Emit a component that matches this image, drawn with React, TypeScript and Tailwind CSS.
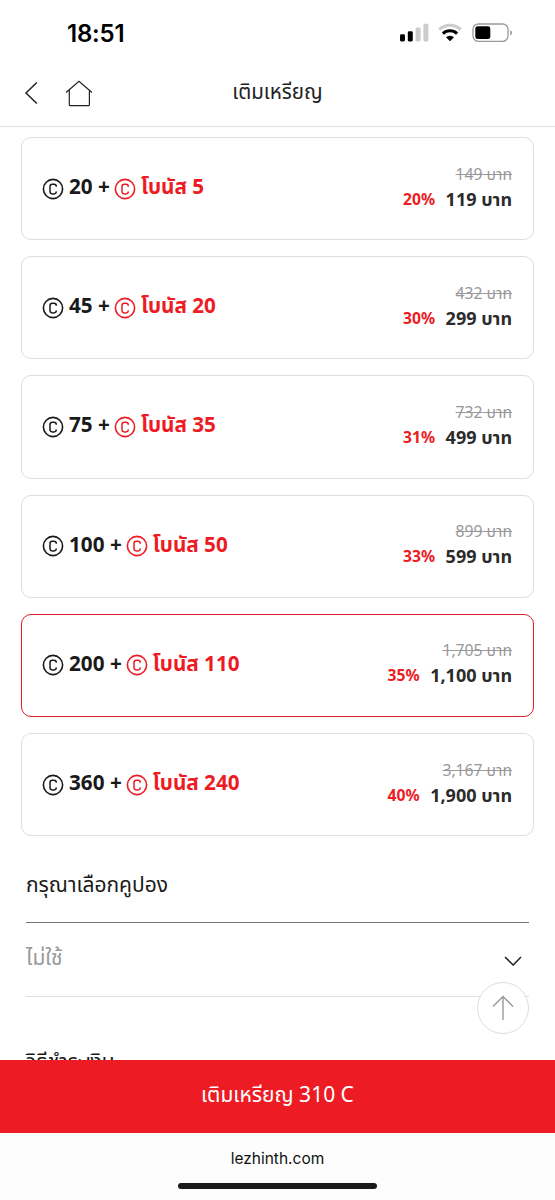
import React from 'react';

interface CoinPackage {
  id: number;
  coins: string;
  bonus: string;
  originalPrice: string;
  discount: string;
  price: string;
}

const packages: CoinPackage[] = [
  { id: 1, coins: '20', bonus: '5', originalPrice: '149', discount: '20%', price: '119' },
  { id: 2, coins: '45', bonus: '20', originalPrice: '432', discount: '30%', price: '299' },
  { id: 3, coins: '75', bonus: '35', originalPrice: '732', discount: '31%', price: '499' },
  { id: 4, coins: '100', bonus: '50', originalPrice: '899', discount: '33%', price: '599' },
  { id: 5, coins: '200', bonus: '110', originalPrice: '1,705', discount: '35%', price: '1,100' },
  { id: 6, coins: '360', bonus: '240', originalPrice: '3,167', discount: '40%', price: '1,900' }
];

const CoinIcon: React.FC<{ className?: string }> = ({ className }) => (
  <svg viewBox="0 0 22 22" fill="none" stroke="currentColor" className={`h-[22px] w-[22px] shrink-0 ${className ?? ''}`}>
    <circle cx="11" cy="11" r="9.6" strokeWidth="1.6" />
    <path d="M14.3 8.8V8.6Q14.3 6.3 12 6.3H10.3Q8 6.3 8 8.6V13.6Q8 15.9 10.3 15.9H12Q14.3 15.9 14.3 13.6V13.4" strokeWidth="1.5" />
  </svg>
);

const StatusBar: React.FC = () => (
  <div className="flex h-[60px] items-start justify-between pl-[67px] pr-[42px]">
    <span className="mt-[18px] font-['Inter','Liberation_Sans',sans-serif] text-[24px] leading-[32px] font-semibold tracking-[-0.2px] text-black">
      18:51
    </span>
    <div className="mt-[22px] flex items-center">
      <svg viewBox="0 0 29 20" className="mr-[-1px] h-5 w-[29px]">
        <rect x="0" y="12.3" width="5" height="7.2" rx="1.4" fill="#000" />
        <rect x="7.8" y="9.3" width="5" height="10.2" rx="1.4" fill="#000" />
        <rect x="15.6" y="5.5" width="5" height="14" rx="1.4" fill="#ccc" />
        <rect x="23.4" y="1.8" width="5" height="17.7" rx="1.4" fill="#ccc" />
      </svg>
      <svg viewBox="0 0 24 20" className="ml-[10px] h-5 w-6" fill="none">
        <path d="M1.2 7.6A15.6 15.6 0 0 1 22.8 7.6" stroke="#ccc" strokeWidth="3" />
        <path d="M4.9 11.6A10.2 10.2 0 0 1 19.1 11.6" stroke="#000" strokeWidth="3" />
        <path d="M8 15.3A5.8 5.8 0 0 1 16 15.3L12 19.3Z" fill="#000" />
      </svg>
      <svg viewBox="0 0 42 20" className="mr-[-1px] ml-[10px] h-5 w-[42px]">
        <rect x="1" y="2" width="35" height="17.4" rx="5.4" fill="none" stroke="#999" strokeWidth="1.3" />
        <rect x="3.3" y="4.3" width="15" height="12.8" rx="2.4" fill="#000" />
        <path d="M38.2 8.2V13.4C40.6 12.4 40.6 9.2 38.2 8.2Z" fill="#999" />
      </svg>
    </div>
  </div>
);

const Header: React.FC = () => (
  <header className="grid h-[67px] grid-cols-[1fr_auto_1fr] items-center border-b-[1.5px] border-[#e0e0e0]">
    <div className="flex items-center pl-6 text-[#222]">
      <button>
        <svg viewBox="0 0 14 24" className="h-6 w-[14px]" fill="none" stroke="currentColor" strokeWidth="1.5">
          <path d="M12.8 1.5L2 12L12.8 22.5" />
        </svg>
      </button>
      <button className="ml-[27px]">
        <svg viewBox="0 0 28 27" className="h-[27px] w-7" fill="none" stroke="currentColor" strokeWidth="1.2">
          <path d="M1 12.5L14 1.3L27 12.5M4.3 10V24.7Q4.3 25.7 5.3 25.7H23.4Q24.4 25.7 24.4 24.7V10" />
        </svg>
      </button>
    </div>
    <h1 className="mb-[5px] text-[20.5px] leading-[28px] text-[#222]">เติมเหรียญ</h1>
    <div />
  </header>
);

const PackageCard: React.FC<{ item: CoinPackage; selected: boolean; onSelect: () => void }> = ({
  item,
  selected,
  onSelect
}) => (
  <button
    onClick={onSelect}
    className={`flex h-[103.2px] w-full items-center justify-between rounded-[10px] border pr-[21px] pl-5 text-left ${
      selected ? 'border-[#dc1f2b]' : 'border-[#dedede]'
    }`}
  >
    <div className="flex items-center text-[20.7px] leading-[28px] font-bold whitespace-nowrap text-[#1a1a1a]">
      <CoinIcon />
      <span className="mb-[5px] ml-[5px]">{item.coins} +</span>
      <CoinIcon className="ml-1 text-[#ed1c24]" />
      <span className="mb-[5px] ml-[5px] text-[#ed1c24]">โบนัส {item.bonus}</span>
    </div>
    <div className="mb-[4px] flex flex-col items-end whitespace-nowrap">
      <span className="text-[15.7px] leading-[24px] text-[#999] line-through">{item.originalPrice} บาท</span>
      <div className="flex items-center">
        <span className="text-[15.7px] leading-[26px] font-bold text-[#ed1c24]">{item.discount}</span>
        <span className="ml-[10.5px] text-[18px] leading-[26px] font-bold text-[#2b2b2b]">{item.price} บาท</span>
      </div>
    </div>
  </button>
);

const CouponSection: React.FC = () => (
  <section className="mx-[26px] mt-[33px]">
    <h2 className="h-[54px] border-b-[1.5px] border-[#777] text-[21px] leading-[30px] text-[#1a1a1a]">กรุณาเลือกคูปอง</h2>
    <div className="flex h-[74px] items-center justify-between border-b border-[#dedede] pr-[7px] text-[#222]">
      <span className="mb-[6px] text-[21px] leading-[30px] text-[#999]">ไม่ใช้</span>
      <svg viewBox="0 0 18 10" className="mt-[3px] h-[10px] w-[18px]" fill="none" stroke="currentColor" strokeWidth="1.5">
        <path d="M1 1L9.2 9L17 1" />
      </svg>
    </div>
    <h2 className="mt-[49px] text-[21px] leading-[30px] text-[#1a1a1a]">วิธีชำระเงิน</h2>
  </section>
);

export default function App() {
  const [selectedId, setSelectedId] = React.useState(5);

  return (
    <div className="relative flex h-[1200px] w-[555px] flex-col overflow-hidden bg-white font-['Noto_Sans','Noto_Sans_Thai',sans-serif]">
      <StatusBar />
      <Header />
      <main className="min-h-0 flex-1 overflow-hidden">
        <div className="mx-[21px] mt-[10px] flex flex-col gap-4">
          {packages.map((item) => (
            <PackageCard
              key={item.id}
              item={item}
              selected={item.id === selectedId}
              onSelect={() => setSelectedId(item.id)}
            />
          ))}
        </div>
        <CouponSection />
      </main>

      {/* Scroll to top */}
      <button className="absolute top-[982px] right-[26px] flex h-[52px] w-[52px] items-center justify-center rounded-full border-[1.5px] border-[#dedede] bg-white">
        <svg viewBox="0 0 22 26" className="h-[26px] w-[22px]" fill="none" stroke="#999" strokeWidth="1.4">
          <path d="M11 25V1.5M1 11.5L11 1.5L21 11.5" />
        </svg>
      </button>

      <button className="h-[73px] shrink-0 bg-[#ed1c24] pb-1 text-[21px] text-white">เติมเหรียญ 310 C</button>
      <footer className="flex h-[67px] shrink-0 flex-col items-center bg-[#fdfdfd]">
        <span className="mt-[14px] font-['Inter','Liberation_Sans',sans-serif] text-[15.5px] leading-6 text-[#111]">
          lezhinth.com
        </span>
        <div className="mt-[12px] h-[6px] w-[199px] rounded-full bg-[#1a1a1a]" />
      </footer>
    </div>
  );
}
